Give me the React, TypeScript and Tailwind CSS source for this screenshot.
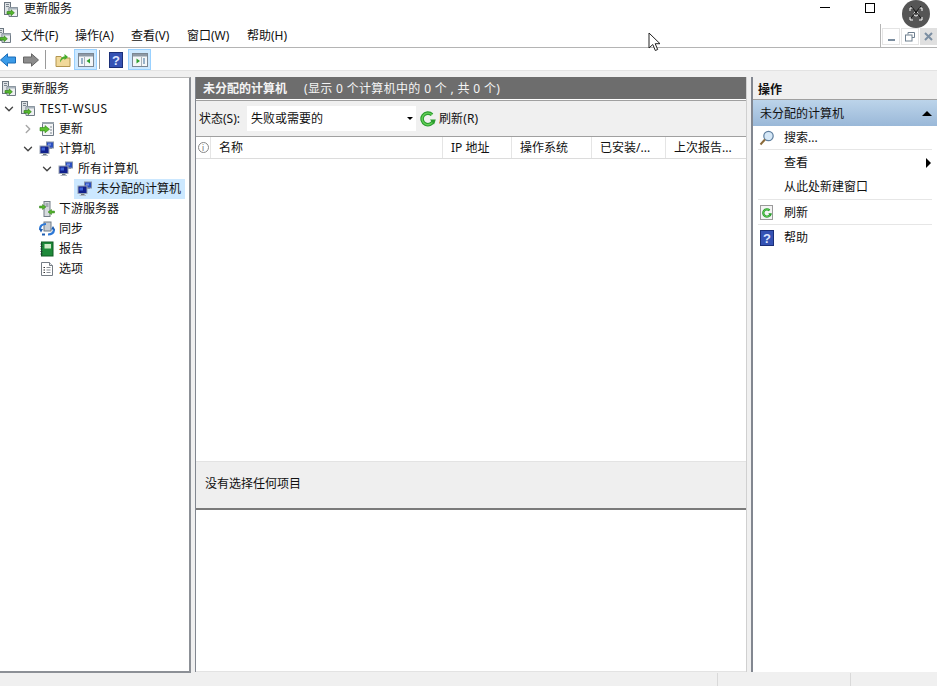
import type React from 'react';
import { ChevronDown, ChevronRight } from 'lucide-react';

const FONT = "font-['Noto_Sans','Noto_Sans_CJK_SC',sans-serif]";

function ServerIcon(): React.JSX.Element {
  return (
    <svg width="16" height="16" viewBox="0 0 16 16" className="shrink-0">
      <rect x="1.5" y="0.5" width="6" height="12" fill="#dfe3e6" stroke="#6c7680" />
      <rect x="3" y="2" width="3" height="1" fill="#7d8790" />
      <rect x="3" y="4" width="3" height="1" fill="#7d8790" />
      <path d="M6 5.5h8.5v9H6z" fill="#eef0f2" stroke="#6f7a85" />
      <path d="M6 5.5h8.5v2H6z" fill="#aab4bd" />
      <path d="M4 9.5h4V7.8l3.4 3-3.4 3V12H4z" fill="#55b52e" stroke="#2d7d18" strokeWidth="0.6" />
    </svg>
  );
}

function UpdatesIcon(): React.JSX.Element {
  return (
    <svg width="16" height="16" viewBox="0 0 16 16" className="shrink-0">
      <path d="M3.5 1.5h11v13h-11z" fill="#f4f5f6" stroke="#6f7a85" />
      <path d="M3 1h12v2H3z" fill="#9aa4ad" />
      <path d="M1 6.5h5V4.6l4.5 3.6L6 11.8V9.9H1z" fill="#5cc02f" stroke="#2f8a18" strokeWidth="0.6" />
      <path d="M11 6h2M11 9h2M11 12h2" stroke="#7d8790" />
    </svg>
  );
}

function ComputersIcon(): React.JSX.Element {
  return (
    <svg width="16" height="16" viewBox="0 0 16 16" className="shrink-0">
      <rect x="7.5" y="1" width="7" height="6" fill="#2a4fc0" stroke="#8894a8" />
      <rect x="9" y="2.5" width="3" height="2" fill="#6e8be6" />
      <rect x="10" y="7" width="3" height="1" fill="#8894a8" />
      <rect x="1" y="5" width="9" height="7.5" fill="#10208c" stroke="#9aa4b4" />
      <rect x="2.5" y="6.5" width="3.5" height="3" fill="#3f62d6" />
      <rect x="4" y="13" width="3.5" height="1.2" fill="#6c7680" />
      <rect x="2.5" y="14" width="6.5" height="1" fill="#b3bac4" />
    </svg>
  );
}

function DownstreamIcon(): React.JSX.Element {
  return (
    <svg width="16" height="16" viewBox="0 0 16 16" className="shrink-0">
      <rect x="5" y="0.5" width="6" height="15" fill="#d7dbdf" stroke="#727c86" />
      <path d="M6.5 3h3M6.5 5h3" stroke="#6f7a85" />
      <path d="M0.5 5h3V3.5L7 6 3.5 8.5V7h-3z" fill="#55b52e" stroke="#2d7d18" strokeWidth="0.5" />
      <path d="M15.5 10h-3V8.5L9 11l3.5 2.5V12h3z" fill="#55b52e" stroke="#2d7d18" strokeWidth="0.5" />
    </svg>
  );
}

function SyncIcon(): React.JSX.Element {
  return (
    <svg width="16" height="16" viewBox="0 0 16 16" className="shrink-0">
      <rect x="5" y="1" width="7" height="9" fill="#c9ced4" stroke="#6f7a85" />
      <path d="M1 8.5C1 5 3.5 3 7 3" fill="none" stroke="#2d78d6" strokeWidth="2.2" />
      <path d="M15 8c0 3.5-2.5 5.5-6 5.5" fill="none" stroke="#2d78d6" strokeWidth="2.2" />
      <path d="M0 8h4l-2 3.5zM12 8.5h4L14 5z" fill="#1d5cb0" />
      <path d="M3 14.5h3v-2H3z" fill="#1d5cb0" />
    </svg>
  );
}

function ReportIcon(): React.JSX.Element {
  return (
    <svg width="16" height="16" viewBox="0 0 16 16" className="shrink-0">
      <rect x="2.5" y="1" width="11.5" height="14" fill="#1e8a3a" stroke="#0f5a22" />
      <rect x="5.5" y="3" width="6.5" height="4.5" fill="#cfe9c8" />
      <path d="M1.5 3h2M1.5 5.5h2M1.5 8h2M1.5 10.5h2M1.5 13h2" stroke="#26323a" />
    </svg>
  );
}

function OptionsIcon(): React.JSX.Element {
  return (
    <svg width="16" height="16" viewBox="0 0 16 16" className="shrink-0">
      <path d="M2.5 1.5h8l3 3v10h-11z" fill="#fff" stroke="#747c84" />
      <path d="M10.5 1.5v3h3" fill="#e5e7ea" stroke="#747c84" />
      <path d="M4.5 6.5H6M4.5 9H6M4.5 11.5H6" stroke="#333" strokeWidth="1.2" />
      <path d="M7.5 6.5h4M7.5 9h4M7.5 11.5h4" stroke="#8a9097" />
    </svg>
  );
}

function HelpIcon(): React.JSX.Element {
  return (
    <svg width="14" height="16" viewBox="0 0 14 16" className="shrink-0">
      <rect x="0.5" y="0.5" width="13" height="15" fill="#3552b4" stroke="#1b2f78" />
      <text x="7" y="13" textAnchor="middle" fontSize="13" fontWeight="700" fill="#dfe6ff" fontFamily="Liberation Sans, sans-serif">?</text>
    </svg>
  );
}

function RefreshArrow({ size }: { size: number }): React.JSX.Element {
  return (
    <svg width={size} height={size} viewBox="0 0 16 16" className="shrink-0">
      <path d="M13.5 9.5A5.8 5.8 0 1 1 12 3.8" fill="none" stroke="#2a9d2f" strokeWidth="3.6" />
      <path d="M13.5 9.5A5.8 5.8 0 1 1 12 3.8" fill="none" stroke="#66cf58" strokeWidth="1.4" />
      <path d="M10 8.5h5.8L14 13.5z" fill="#2a9d2f" />
    </svg>
  );
}

function PanelIcon({ side }: { side: 'left' | 'right' }): React.JSX.Element {
  return (
    <svg width="16" height="14" viewBox="0 0 16 14">
      <rect x="0.5" y="0.5" width="15" height="13" fill="#f4f6f8" stroke="#7b8692" />
      <rect x="1" y="1" width="14" height="2.5" fill="#8e99a5" />
      {side === 'left' ? (
        <>
          <path d="M3 6h2M3 8h2M3 10h2" stroke="#3c6e9c" />
          <path d="M6.5 4v9" stroke="#aab2ba" />
          <path d="M12 5.5v5L8.5 8z" fill="#2da02d" />
        </>
      ) : (
        <>
          <path d="M11 6h2M11 8h2M11 10h2" stroke="#3c6e9c" />
          <path d="M9.5 4v9" stroke="#aab2ba" />
          <path d="M4.5 5.5v5L8 8z" fill="#2da02d" />
        </>
      )}
    </svg>
  );
}

const menus = [
  { label: '文件(F)', w: 'w-[54px]' },
  { label: '操作(A)', w: 'w-[56px]' },
  { label: '查看(V)', w: 'w-[56px]' },
  { label: '窗口(W)', w: 'w-[60px]' },
  { label: '帮助(H)', w: 'w-[50px]' },
];

const treeRows = [
  { label: 'TEST-WSUS', pad: 'pl-0', chevron: 'down', icon: <ServerIcon /> },
  { label: '更新', pad: 'pl-[19px]', chevron: 'right', icon: <UpdatesIcon /> },
  { label: '计算机', pad: 'pl-[19px]', chevron: 'down', icon: <ComputersIcon /> },
  { label: '所有计算机', pad: 'pl-[38px]', chevron: 'down', icon: <ComputersIcon /> },
  { label: '未分配的计算机', pad: 'pl-[58px]', chevron: 'none', icon: <ComputersIcon />, selected: true },
  { label: '下游服务器', pad: 'pl-[19px]', chevron: 'none', icon: <DownstreamIcon /> },
  { label: '同步', pad: 'pl-[19px]', chevron: 'none', icon: <SyncIcon /> },
  { label: '报告', pad: 'pl-[19px]', chevron: 'none', icon: <ReportIcon /> },
  { label: '选项', pad: 'pl-[19px]', chevron: 'none', icon: <OptionsIcon /> },
];

const columns = [
  { label: '名称', w: 'w-[232px]' },
  { label: 'IP 地址', w: 'w-[69px]' },
  { label: '操作系统', w: 'w-[80px]' },
  { label: '已安装/...', w: 'w-[74px]' },
  { label: '上次报告...', w: 'flex-1' },
];

export default function App(): React.JSX.Element {
  return (
    <div className={`${FONT} relative flex h-[686px] w-[937px] flex-col overflow-hidden bg-white text-[12px] text-[#111]`}>
      {/* Title bar */}
      <div className="flex h-[24px] items-center">
        <div className="ml-[3px] mt-[-5px]"><ServerIcon /></div>
        <span className="ml-[5px] mt-[-6px]">更新服务</span>
        <div className="ml-auto mr-[62px] flex items-center gap-[35px] pb-[9px]">
          <div className="h-[1px] w-[10px] bg-black" />
          <div className="h-[10px] w-[10px] border border-black" />
        </div>
      </div>

      {/* Menu bar */}
      <div className="flex h-[24px] items-center border-b border-[#b4b4b4]">
        <div className="ml-[-4px]"><ServerIcon /></div>
        <div className="ml-[9px] flex">
          {menus.map((menu) => (
            <span key={menu.label} className={menu.w}>{menu.label}</span>
          ))}
        </div>
        <div className="ml-auto flex h-[24px] items-end self-start">
          <div className="mr-[1px] h-[24px] w-[1px] bg-[#b4b4b4]" />
          <div className="mb-[3px] flex gap-[1px]">
            <div className="flex h-[17px] w-[18px] items-end justify-center border border-[#e4e4e4] pb-[3px]">
              <div className="h-[2px] w-[7px] bg-[#7c8ea0]" />
            </div>
            <div className="flex h-[17px] w-[18px] items-center justify-center border border-[#e4e4e4]">
              <svg width="10" height="10" viewBox="0 0 10 10" fill="none" stroke="#6f8090">
                <path d="M3 2.5V0.500h6.500v5H7" />
                <rect x="0.5" y="3" width="6.5" height="6" />
              </svg>
            </div>
            <div className="flex h-[17px] w-[17px] items-center justify-center bg-[#e0e0e0]">
              <svg width="9" height="9" viewBox="0 0 9 9" stroke="#7b8ea2" strokeWidth="2">
                <path d="M1 1l7 7M8 1L1 8" />
              </svg>
            </div>
          </div>
        </div>
      </div>

      {/* Toolbar */}
      <div className="flex h-[23px] items-center border-b border-[#e3e3e3] pt-[1px]">
        <svg width="16" height="14" viewBox="0 0 16 14">
          <path d="M0.5 7L7.5 0.8V4h8v6h-8v3.2z" fill="#3b9be8" stroke="#1a6cb8" />
        </svg>
        <svg width="16" height="14" viewBox="0 0 16 14" className="ml-[7px]">
          <path d="M15.5 7L8.5 0.8V4H0.5v6h8v3.2z" fill="#8c8c8c" stroke="#666" />
        </svg>
        <div className="ml-[6px] h-[19px] w-[1px] bg-[#9a9a9a]" />
        <svg width="16" height="14" viewBox="0 0 16 14" className="ml-[9px]">
          <path d="M1 3.5h5L7 5h8v8.500H1z" fill="#f1d99a" stroke="#b39650" />
          <path d="M5 9.5C5 6 7 3.5 9.5 3.500V1L13 4 9.5 7V5.500C8 5.500 6.500 7 5 9.5z" fill="#46ad2c" />
        </svg>
        <div className="ml-[3px] flex h-[21px] w-[23px] items-center justify-center border border-[#99d1ff] bg-[#cce8ff]">
          <PanelIcon side="left" />
        </div>
        <div className="ml-[2px] h-[19px] w-[1px] bg-[#9a9a9a]" />
        <div className="ml-[9px]"><HelpIcon /></div>
        <div className="ml-[5px] flex h-[21px] w-[23px] items-center justify-center border border-[#99d1ff] bg-[#cce8ff]">
          <PanelIcon side="right" />
        </div>
      </div>

      {/* Panels */}
      <div className="flex h-[602px] bg-[#f0f0f0] pt-[6px]">
        {/* Tree */}
        <div className="h-[596px] w-[191px] shrink-0 border-r-2 border-b-2 border-t border-[#8c9096] border-t-[#b8b8b8] bg-white pt-[1px]">
          <div className="flex h-[20px] items-center pl-[1px]">
            <ServerIcon />
            <span className="ml-[4px]">更新服务</span>
          </div>
          {treeRows.map((row) => (
            <div key={row.label} className={`flex h-[20px] items-center ${row.pad}`}>
              <div className="flex w-[17px] shrink-0 justify-center">
                {row.chevron === 'down' && <ChevronDown size={14} strokeWidth={2.4} className="text-[#444]" />}
                {row.chevron === 'right' && <ChevronRight size={14} strokeWidth={2.4} className="text-[#a6a6a6]" />}
              </div>
              <div className={`flex h-[20px] items-center pl-[3px] ${row.selected ? 'w-[111px] bg-[#cce8ff] -ml-[1px]' : ''}`}>
                {row.icon}
                <span className={row.label === 'TEST-WSUS' ? 'ml-[4px] tracking-[0.5px]' : 'ml-[4px]'}>{row.label}</span>
              </div>
            </div>
          ))}
        </div>

        {/* Center */}
        <div className="ml-[4px] flex h-[595px] w-[552px] shrink-0 flex-col border-l border-r border-[#828790] border-r-[#d0d0d0] bg-white">
          <div className="flex h-[22px] shrink-0 items-center bg-[#6d6d6d] pl-[7px] pt-[2px] text-[#f4f4f4]">
            <span className="font-bold">未分配的计算机</span>
            <span className="ml-[17px] tracking-[0.33px]">(显示 0 个计算机中的 0 个 , 共 0 个)</span>
          </div>
          <div className="h-[2px] shrink-0 border-b border-[#a0a0a0] bg-white" />
          <div className="flex h-[36px] shrink-0 items-center border-b border-[#a0a0a0] bg-[#f0f0f0] pl-[3px]">
            <span>状态(S):</span>
            <div className="ml-[7px] flex h-[25px] w-[169px] items-center justify-between bg-white pl-[4px] pr-[3px]">
              <span>失败或需要的</span>
              <div className="h-0 w-0 border-x-[3px] border-t-[3px] border-x-transparent border-t-black" />
            </div>
            <div className="ml-[4px]"><RefreshArrow size={16} /></div>
            <span className="ml-[3px] tracking-[0.1px]">刷新(R)</span>
          </div>
          <div className="flex h-[22px] shrink-0 items-center border-b border-[#dcdcdc]">
            <div className="flex h-full w-[15px] shrink-0 items-center justify-center border-r border-[#e5e5e5]">
              <div className="flex h-[11px] w-[11px] items-center justify-center rounded-full border border-[#888] text-[8px] leading-none text-[#666]">i</div>
            </div>
            {columns.map((col) => (
              <div key={col.label} className={`flex h-full items-center border-r border-[#e5e5e5] pl-[8px] last:border-r-0 ${col.w}`}>
                {col.label}
              </div>
            ))}
          </div>
          <div className="flex-1 border-b border-[#e3e3e3] bg-white" />
          <div className="flex h-[48px] shrink-0 items-center border-b-2 border-[#7a7a7a] bg-[#efefef] pb-[2px] pl-[9px]">
            没有选择任何项目
          </div>
          <div className="h-[162px] shrink-0 border-b border-[#e3e3e3] bg-white" />
        </div>

        {/* Actions */}
        <div className="ml-[4px] flex h-[595px] flex-1 flex-col border-l-2 border-[#828790] bg-white">
          <div className="flex h-[23px] shrink-0 items-center border-b border-[#a0a0a0] bg-[#f0f0f0] pl-[5px] pt-[3px] font-bold">操作</div>
          <div className="flex h-[26px] shrink-0 items-center justify-between bg-gradient-to-b from-[#bcd4ea] to-[#9ab8d8] pl-[7px] pr-[5px] pt-[1px]">
            <span>未分配的计算机</span>
            <div className="h-0 w-0 border-x-[5px] border-b-[5px] border-x-transparent border-b-black" />
          </div>
          <div className="flex flex-col pl-[5px] pr-[5px]">
            <div className="flex h-[24px] items-center border-b border-[#e6e6e6] pt-[1px]">
              <svg width="16" height="16" viewBox="0 0 16 16" className="ml-[1px] shrink-0">
                <circle cx="9.5" cy="6" r="4.7" fill="#d6e8f7" stroke="#5f7f9f" strokeWidth="1.2" />
                <path d="M6 9.5L1.5 14.5" stroke="#8a6a3a" strokeWidth="2" />
              </svg>
              <span className="ml-[9px]">搜索...</span>
            </div>
            <div className="flex h-[25px] items-center justify-between pl-[26px] pr-[1px]">
              <span>查看</span>
              <div className="h-0 w-0 border-y-[5px] border-l-[5px] border-y-transparent border-l-black" />
            </div>
            <div className="flex h-[25px] items-center border-b border-[#e6e6e6] pl-[26px]">从此处新建窗口</div>
            <div className="flex h-[25px] items-center border-b border-[#e6e6e6] pt-[1px]">
              <div className="ml-[2px] flex h-[15px] w-[13px] items-center justify-center border border-[#9a9a9a] bg-[#f4f4f4]">
                <RefreshArrow size={10} />
              </div>
              <span className="ml-[11px]">刷新</span>
            </div>
            <div className="flex h-[25px] items-center">
              <div className="ml-[2px]"><HelpIcon /></div>
              <span className="ml-[10px]">帮助</span>
            </div>
          </div>
        </div>
      </div>

      {/* Status bar */}
      <div className="flex flex-1 bg-[#f0f0f0]">
        <div className="w-[718px] border-r border-[#d9d9d9]" />
        <div className="w-[133px] border-r border-[#d9d9d9]" />
      </div>

      {/* Mouse cursor over the page */}
      <svg width="14" height="20" viewBox="0 0 14 20" className="absolute left-[648px] top-[32px]">
        <path d="M1 1v15l3.8-3.5 2.5 6 2.400-1-2.500-5.800H12z" fill="#fff" stroke="#222" />
      </svg>

      {/* Floating capture button */}
      <div className="absolute left-[902px] top-0 flex h-[28px] w-[28px] items-center justify-center rounded-full bg-[#555]">
        <svg width="16" height="16" viewBox="0 0 16 16" fill="none" stroke="#fff" strokeWidth="1">
          <path d="M2 5V2h3M11 2h3v3M14 11v3h-3M5 14H2v-3" />
          <circle cx="8" cy="8" r="2" />
          <path d="M3 0l10 12M13 0L3 12" stroke="#111" />
        </svg>
      </div>
    </div>
  );
}
